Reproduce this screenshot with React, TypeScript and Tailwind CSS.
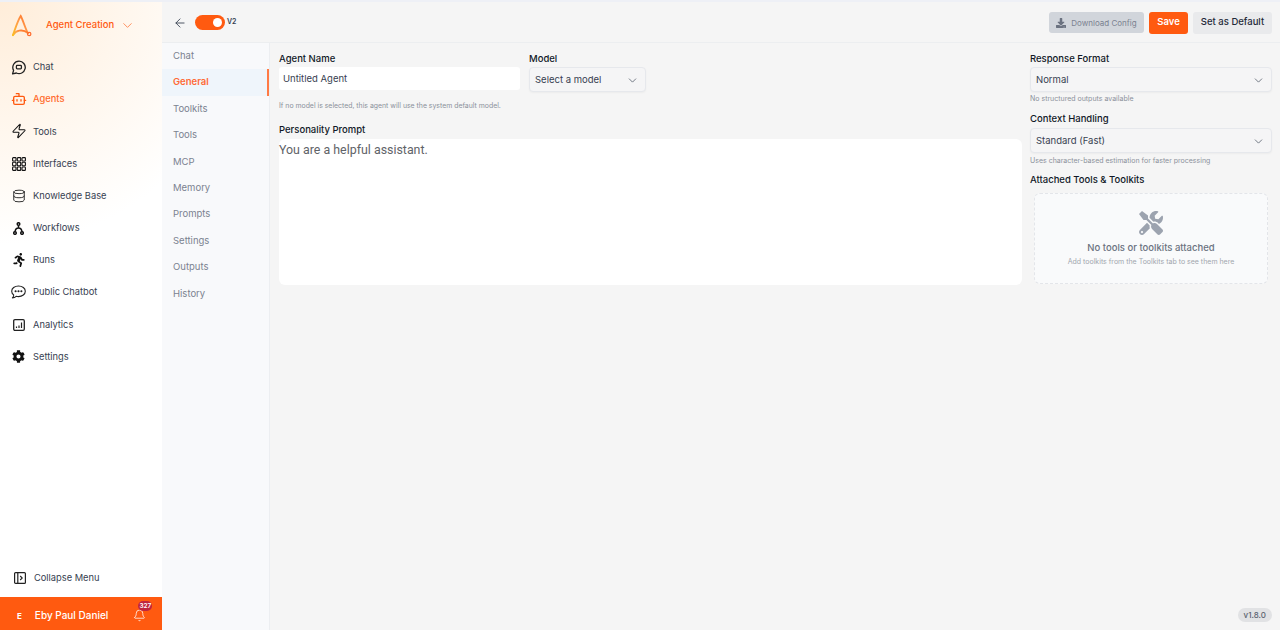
import React from 'react';
import {
  ArrowLeft, ChevronDown, Bell, Database, Zap, Bot,
} from 'lucide-react';
import {
  FaCog, FaDownload, FaRunning, FaTools,
} from 'react-icons/fa';

const fontUi = "font-['Inter','Liberation_Sans',sans-serif]";

function LogoMark() {
  return (
    <svg width="24" height="30" viewBox="0 0 24 30" fill="none">
      <defs>
        <linearGradient id="logo" x1="0" y1="1" x2="1" y2="0">
          <stop offset="0" stopColor="#fbbf24" />
          <stop offset="0.55" stopColor="#ff9a4a" />
          <stop offset="1" stopColor="#ff6a20" />
        </linearGradient>
      </defs>
      <path d="M0.9 24.2 C3.5 17 6 9 8.7 5 C11 9 13 17 15.8 22" stroke="url(#logo)" strokeWidth="1.9" strokeLinecap="round" />
      <path d="M1 24 C4 19.5 10 17.5 16 22" stroke="url(#logo)" strokeWidth="1.9" strokeLinecap="round" />
      <circle cx="17.2" cy="23" r="1.7" stroke="#ff6a2b" strokeWidth="1.2" />
    </svg>
  );
}

function ChatIcon() {
  return (
    <svg width="15" height="15" viewBox="0 0 15 15" fill="none" stroke="#222" strokeWidth="1.3">
      <path d="M8 1.2a6.2 6.2 0 1 1-2.6 11.8L1.6 13.8l1-3.4A6.2 6.2 0 0 1 8 1.2Z" strokeLinejoin="round" />
      <rect x="5.4" y="5.4" width="5" height="3.4" rx="0.8" />
    </svg>
  );
}

function GridIcon() {
  const cells = [0, 1, 2, 3, 4, 5, 6, 7, 8];
  return (
    <svg width="14" height="14" viewBox="0 0 14 14" fill="none" stroke="#111" strokeWidth="1.1">
      {cells.map((c) => (
        <rect key={c} x={0.6 + (c % 3) * 4.7} y={0.6 + Math.floor(c / 3) * 4.7} width="3.4" height="3.4" rx="0.7" />
      ))}
    </svg>
  );
}

function WorkflowIcon() {
  return (
    <svg width="11" height="13" viewBox="0 0 11 13" fill="none" stroke="#111" strokeWidth="1.5">
      <circle cx="5.5" cy="2" r="1.3" />
      <circle cx="2" cy="11" r="1.3" />
      <circle cx="9" cy="11" r="1.3" />
      <path d="M5.5 3.4V6M5.5 6C3.6 6 2.3 7.6 2 9.6M5.5 6c1.9 0 3.2 1.6 3.5 3.6" />
    </svg>
  );
}

function PublicChatIcon() {
  return (
    <svg width="15" height="14" viewBox="0 0 15 14" fill="none" stroke="#222" strokeWidth="1.1">
      <path d="M7.5 1C3.6 1 .7 3.3.7 6.2c0 1.5.8 2.8 2 3.7 0 1.1-.6 2.3-1.3 3 1.6-.1 2.9-.8 3.8-1.6.7.2 1.5.3 2.3.3 3.8 0 6.8-2.4 6.8-5.4S11.3 1 7.5 1Z" strokeLinejoin="round" />
      <circle cx="4.6" cy="6.3" r="0.5" fill="#222" />
      <circle cx="7.5" cy="6.3" r="0.5" fill="#222" />
      <circle cx="10.4" cy="6.3" r="0.5" fill="#222" />
    </svg>
  );
}

function AnalyticsIcon() {
  return (
    <svg width="12" height="12" viewBox="0 0 12 12" fill="none" stroke="#222">
      <rect x="0.7" y="0.7" width="10.6" height="10.6" rx="1.2" strokeWidth="1.3" />
      <path d="M3.5 9V7.5M6 9V6.4M8.5 9V3.6" strokeWidth="1.2" />
    </svg>
  );
}

function CollapseIcon() {
  return (
    <svg width="12" height="12" viewBox="0 0 12 12" fill="none" stroke="#222">
      <rect x="0.6" y="0.6" width="10.8" height="10.8" rx="1" strokeWidth="1.2" />
      <path d="M3.8 1v10" strokeWidth="1.2" />
      <path d="M6.2 4l2 2-2 2" strokeWidth="1.1" />
    </svg>
  );
}

type NavItem = { label: string; icon: React.ReactNode; active?: boolean };

const navItems: NavItem[] = [
  { label: 'Chat', icon: <ChatIcon /> },
  { label: 'Agents', icon: <Bot size={16} strokeWidth={2} className="text-[#ff5a10]" />, active: true },
  { label: 'Tools', icon: <Zap size={16} strokeWidth={1.6} className="text-[#111]" /> },
  { label: 'Interfaces', icon: <GridIcon /> },
  { label: 'Knowledge Base', icon: <Database size={14} strokeWidth={1.6} className="text-[#222]" /> },
  { label: 'Workflows', icon: <WorkflowIcon /> },
  { label: 'Runs', icon: <FaRunning size={14} className="text-[#111]" /> },
  { label: 'Public Chatbot', icon: <PublicChatIcon /> },
  { label: 'Analytics', icon: <AnalyticsIcon /> },
  { label: 'Settings', icon: <FaCog size={13} className="text-[#111]" /> },
];

const subTabs = ['Chat', 'General', 'Toolkits', 'Tools', 'MCP', 'Memory', 'Prompts', 'Settings', 'Outputs', 'History'];

function Sidebar() {
  return (
    <aside className="flex w-[162px] shrink-0 flex-col bg-white bg-[radial-gradient(circle_at_0%_0%,#ffedd9_0%,#fff6ec_30%,#ffffff_62%)] bg-[length:100%_360px] bg-no-repeat">
      <div className="flex h-[50px] items-center pl-[12px] pt-[1px]">
        <LogoMark />
        <span className="ml-[10px] text-[9.5px] font-medium text-[#ff5a10]">Agent Creation</span>
        <ChevronDown size={15} strokeWidth={1.3} className="ml-[6px] text-[#ff7a40]" />
      </div>
      <nav className="flex flex-1 flex-col pt-[1px]">
        {navItems.map((item) => (
          <div key={item.label} className="flex h-[32.2px] items-center">
            <span className="flex w-[33px] shrink-0 justify-center pl-[4px]">{item.icon}</span>
            <span className={`text-[9.3px] ${item.active ? 'font-medium text-[#ff6a2b]' : 'text-[#374151]'}`}>
              {item.label}
            </span>
          </div>
        ))}
      </nav>
      <div className="flex h-[48px] items-center pl-[14px] pt-[10px]">
        <CollapseIcon />
        <span className="ml-[8px] text-[9.3px] text-[#374151]">Collapse Menu</span>
      </div>
      <div className="flex h-[33px] items-center bg-[#ff5a10] pl-[17px] pt-[4px] text-white">
        <span className="text-[8px] font-bold">E</span>
        <span className="ml-[13px] text-[10px] font-medium">Eby Paul Daniel</span>
        <span className="relative ml-[25px]">
          <Bell size={13} strokeWidth={1.4} />
          <span className="absolute -right-[6px] -top-[8px] rounded-full bg-[#c0263f] px-[1px] text-[6.5px] font-semibold leading-[10px]">327</span>
        </span>
      </div>
    </aside>
  );
}

function SubNav() {
  return (
    <div className="flex w-[108px] shrink-0 flex-col border-r border-[#eceef1] bg-[#f8f9fb]">
      {subTabs.map((tab) => (
        <div
          key={tab}
          className={`flex h-[26.4px] items-center pl-[11px] text-[9.5px] ${tab === 'General' ? 'border-r-2 border-[#ff7a45] bg-[#eff5fb] font-semibold text-[#ff6a35]' : 'text-[#7b8290]'}`}
        >
          {tab}
        </div>
      ))}
    </div>
  );
}

function SelectBox({ label, className }: { label: string; className: string }) {
  return (
    <div className={`flex items-center justify-between rounded-[4px] border border-[#e6e8ec] bg-[#f5f5f6] pl-[5px] pr-[6px] pt-[2px] text-[9.5px] text-[#374151] shadow-[0_1px_2px_rgba(0,0,0,0.04)] ${className}`}>
      <span>{label}</span>
      <ChevronDown size={13} strokeWidth={1.4} className="text-[#4b5563]" />
    </div>
  );
}

function Label({ children }: { children: React.ReactNode }) {
  return <div className="text-[9.5px] font-medium leading-[14px] text-[#111827]">{children}</div>;
}

function Hint({ children }: { children: React.ReactNode }) {
  return <div className="text-[7px] leading-[10px] text-[#8b919b]">{children}</div>;
}

function GeneralForm() {
  return (
    <div className="flex flex-1 gap-[8px] pl-[9px] pr-[8px] pt-[9px]">
      <div className="w-[743px]">
        <div className="flex gap-[9px]">
          <div>
            <Label>Agent Name</Label>
            <div className="mt-[1px] flex h-[23px] w-[241px] items-center rounded-[3px] bg-white pl-[4px] pt-[2px] text-[9.5px] text-[#374151]">
              Untitled Agent
            </div>
          </div>
          <div>
            <Label>Model</Label>
            <SelectBox label="Select a model" className="mt-[1px] h-[25px] w-[117px]" />
          </div>
        </div>
        <div className="mt-[9px] text-[6.9px] leading-[10px] text-[#8b919b]">
          If no model is selected, this agent will use the system default model.
        </div>
        <div className="mt-[12px]">
          <Label>Personality Prompt</Label>
        </div>
        <div className="mt-[2px] h-[146px] rounded-[6px] bg-white font-['Roboto',sans-serif] text-[12.4px] leading-[22px] text-[#5f6368]">
          You are a helpful assistant.
        </div>
      </div>
      <div className="w-[242px]">
        <Label>Response Format</Label>
        <SelectBox label="Normal" className="mt-[1px] h-[25px] w-full" />
        <div className="mt-[2px]"><Hint>No structured outputs available</Hint></div>
        <div className="mt-[8px]"><Label>Context Handling</Label></div>
        <SelectBox label="Standard (Fast)" className="mt-[2px] h-[25px] w-full" />
        <div className="mt-[3px]"><Hint>Uses character-based estimation for faster processing</Hint></div>
        <div className="mt-[7px]"><Label>Attached Tools &amp; Toolkits</Label></div>
        <div className="ml-[4px] mr-[4px] mt-[6px] flex h-[91px] flex-col items-center rounded-[6px] border border-dashed border-[#e3e5e9] bg-[#f9fafb] pt-[17px]">
          <FaTools size={24} className="text-[#9ca3af]" />
          <div className="mt-[6px] text-[9.5px] font-medium text-[#6b7280]">No tools or toolkits attached</div>
          <div className="mt-[2px] text-[7px] text-[#a1a6ae]">Add toolkits from the Toolkits tab to see them here</div>
        </div>
      </div>
    </div>
  );
}

export default function App() {
  return (
    <div className={`relative flex h-[630px] w-[1280px] overflow-hidden bg-[#f5f5f5] ${fontUi}`}>
      <div className="absolute inset-x-0 top-0 h-[2px] bg-[#eef0f6]" />
      <Sidebar />
      <div className="flex min-w-0 flex-1 flex-col">
        <header className="flex h-[43px] shrink-0 items-center border-b border-[#eceef0] pl-[11px] pr-[8px] pt-[3px]">
          <ArrowLeft size={14} strokeWidth={1.5} className="text-[#374151]" />
          <span className="ml-[8px] flex h-[15px] w-[30px] items-center justify-end rounded-full bg-[#ff5a10] pr-[3px]">
            <span className="h-[9px] w-[9px] rounded-full bg-white" />
          </span>
          <span className="ml-[2px] text-[7px] font-semibold text-[#374151]">V2</span>
          <div className="ml-auto flex items-center gap-[5px]">
            <button type="button" className="flex h-[21px] w-[95px] items-center justify-center gap-[5px] rounded-[3px] bg-[#d1d5db] text-[8px] text-[#7b8290]">
              <FaDownload size={10} className="text-[#6b7280]" />
              Download Config
            </button>
            <button type="button" className="h-[22px] w-[39px] rounded-[3px] bg-[#ff5a10] text-[9.5px] font-semibold text-white">Save</button>
            <button type="button" className="h-[22px] w-[79px] rounded-[3px] bg-[#e9eaec] text-[9.5px] font-medium text-[#1f2937]">Set as Default</button>
          </div>
        </header>
        <div className="flex min-h-0 flex-1">
          <SubNav />
          <GeneralForm />
        </div>
      </div>
      <div className="absolute bottom-[8px] right-[8px] rounded-full bg-[#e1e2e4] px-[6px] py-[1px] text-[8px] font-medium leading-[12px] text-[#5b6270]">
        v1.8.0
      </div>
    </div>
  );
}
